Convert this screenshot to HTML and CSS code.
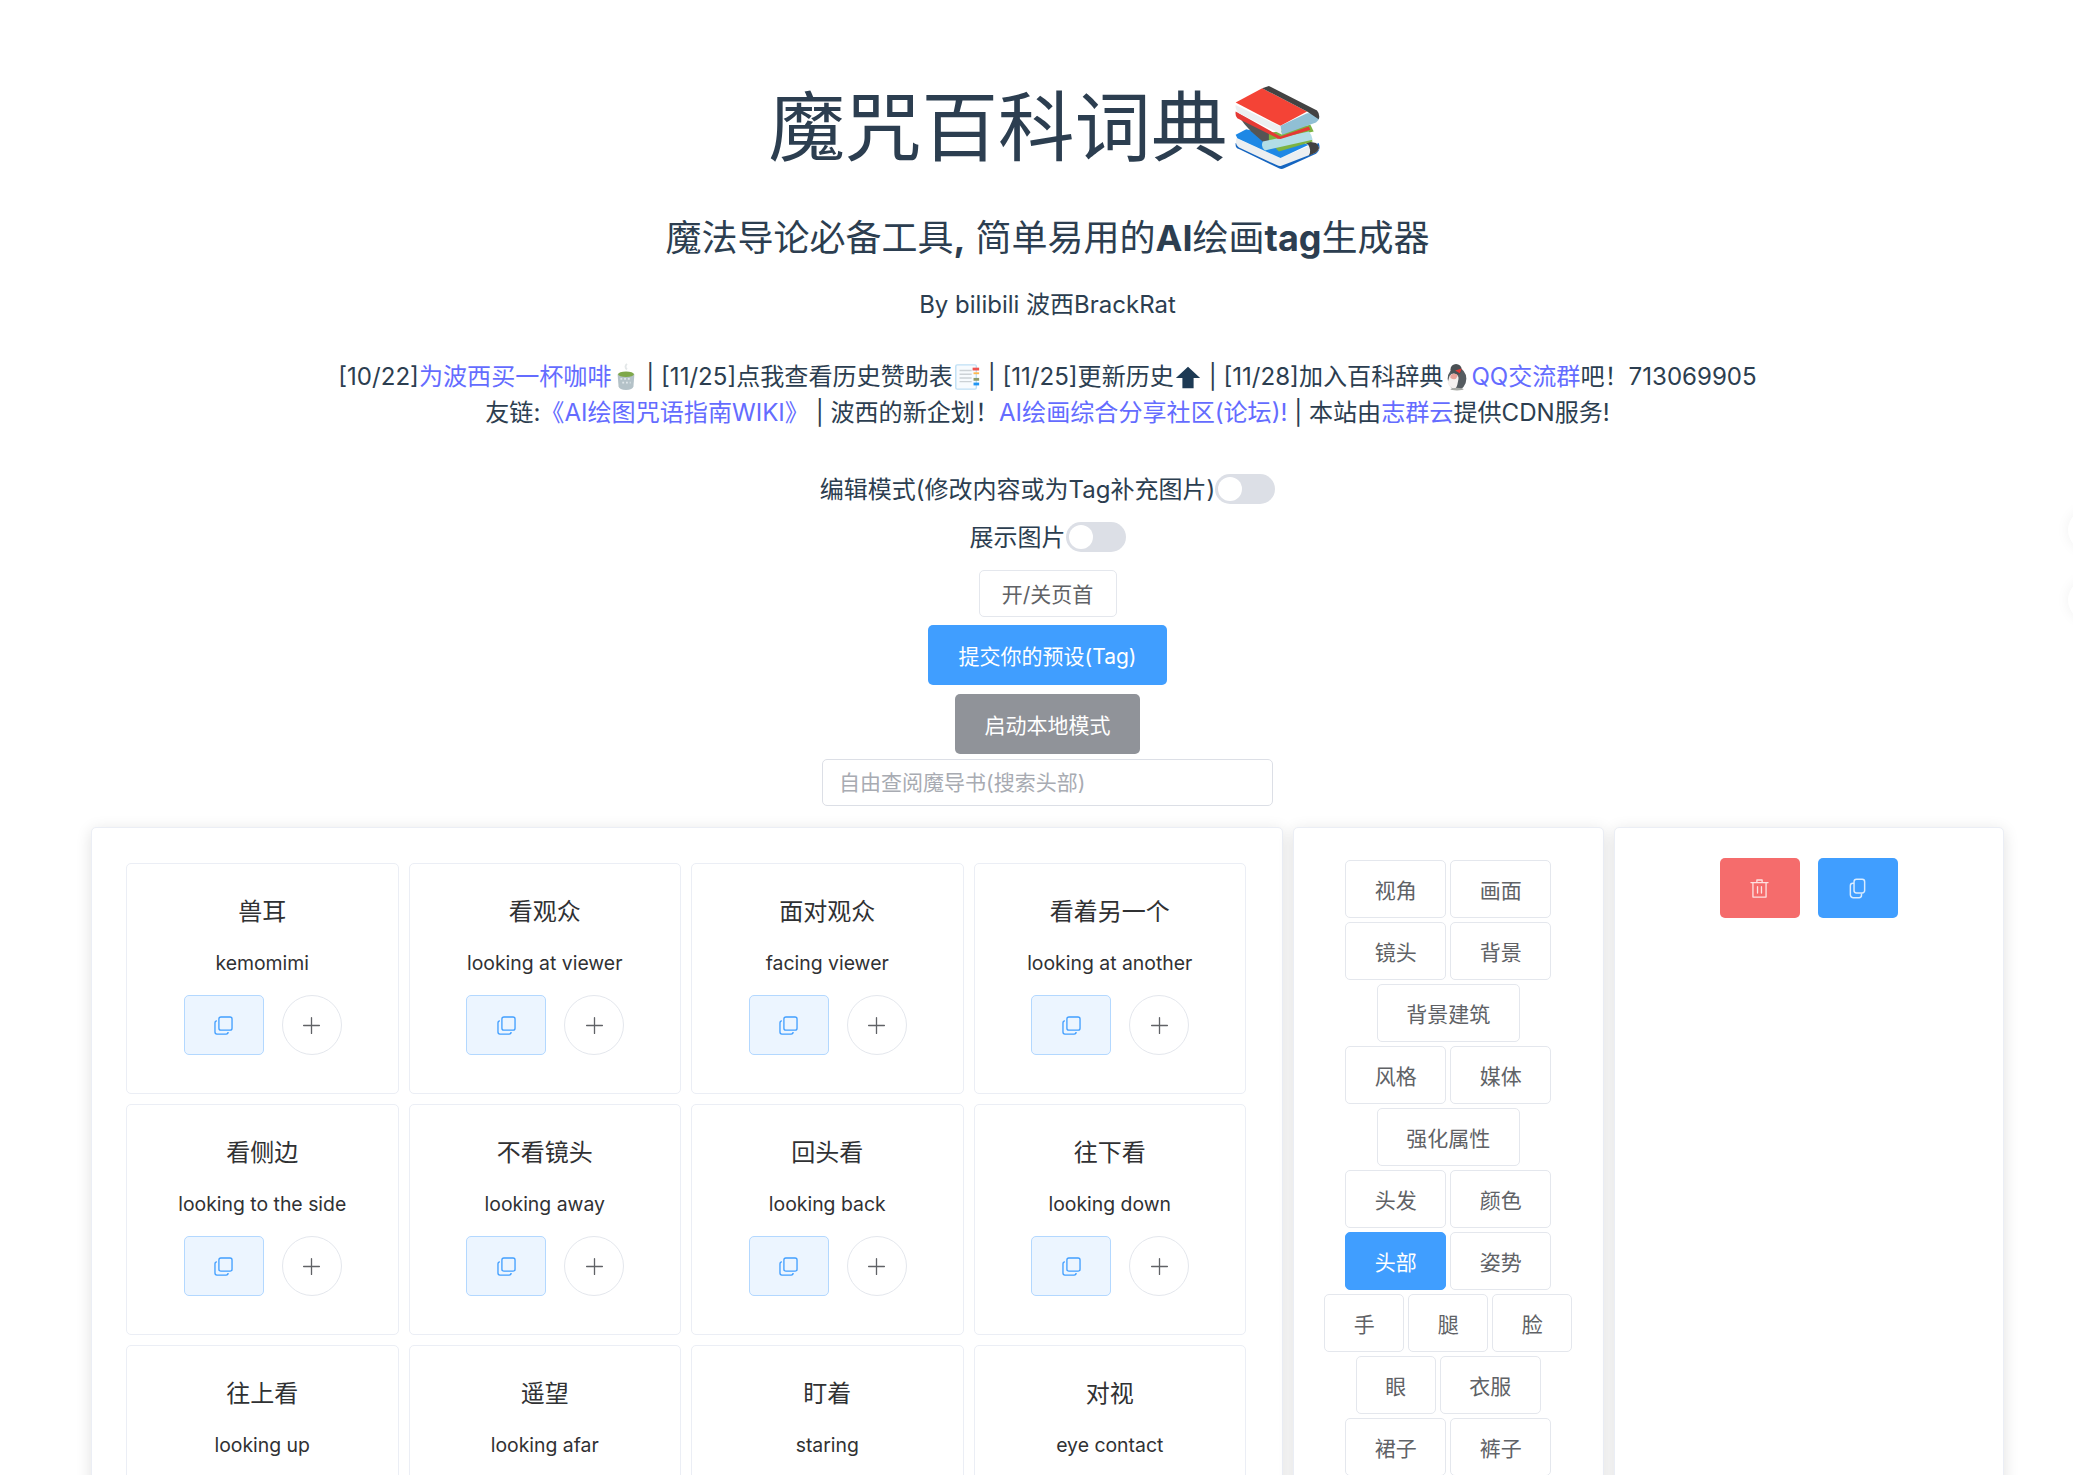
FILE: index.html
```html
<!DOCTYPE html>
<html lang="zh-CN">
<head>
<meta charset="utf-8">
<title>魔咒百科词典</title>
<link rel="stylesheet" href="styles.css">
</head>
<body>
<svg class="sprite" aria-hidden="true">
  <symbol id="i-copy" viewBox="0 0 1024 1024"><path fill="currentColor" d="M768 832a128 128 0 0 1-128 128H192A128 128 0 0 1 64 832V384a128 128 0 0 1 128-128v64a64 64 0 0 0-64 64v448a64 64 0 0 0 64 64h448a64 64 0 0 0 64-64h64z"/><path fill="currentColor" d="M384 128a64 64 0 0 0-64 64v448a64 64 0 0 0 64 64h448a64 64 0 0 0 64-64V192a64 64 0 0 0-64-64H384zm0-64h448a128 128 0 0 1 128 128v448a128 128 0 0 1-128 128H384a128 128 0 0 1-128-128V192A128 128 0 0 1 384 64z"/></symbol>
  <symbol id="i-plus" viewBox="0 0 1024 1024"><path fill="currentColor" d="M480 480V128a32 32 0 0 1 64 0v352h352a32 32 0 0 1 0 64H544v352a32 32 0 1 1-64 0V544H128a32 32 0 0 1 0-64h352z"/></symbol>
  <symbol id="i-delete" viewBox="0 0 1024 1024"><path fill="currentColor" d="M160 256H96a32 32 0 0 1 0-64h256V95.936a32 32 0 0 1 32-32h256a32 32 0 0 1 32 32V192h256a32 32 0 1 1 0 64h-64v672a32 32 0 0 1-32 32H192a32 32 0 0 1-32-32V256zm448-64v-64H416v64h192zM224 896h576V256H224v640zm192-128a32 32 0 0 1-32-32V416a32 32 0 0 1 64 0v320a32 32 0 0 1-32 32zm192 0a32 32 0 0 1-32-32V416a32 32 0 0 1 64 0v320a32 32 0 0 1-32 32z"/></symbol>
  <symbol id="i-docs" viewBox="0 0 20 20"><path fill="none" stroke="currentColor" stroke-width="1.4" d="M9 1.2h5.5a2.3 2.3 0 0 1 2.3 2.3v8.5a2.3 2.3 0 0 1-2.3 2.3H9A2.3 2.3 0 0 1 6.700 12V3.500A2.300 2.300 0 0 1 9 1.200z"/><path fill="none" stroke="currentColor" stroke-width="1.4" d="M6.700 5H5.500a2.300 2.300 0 0 0-2.300 2.300V16a2.800 2.800 0 0 0 2.800 2.800h5.500a2.300 2.300 0 0 0 2.300-2.300v-1.700"/></symbol>
</svg>

<div class="app">
  <header class="head">
    <h1 class="title">魔咒百科词典<svg class="books" viewBox="25 12 265 262" aria-hidden="true">
      <path fill="#1565c0" d="M30 190q-2 15 10 18l120 58q8 4 16 0l96-44q16-12 8-32l-115 55z"/>
      <path fill="#eceff1" d="M32 175l133 60 107-45 10 15q0 7-10 13l-104 40q-6 2-13-1L40 203q-12-8-8-28z"/>
      <path fill="#1e88e5" d="M30 165l32-17 188 47-85 40-130-60z"/>
      <path fill="#424242" d="M222 180l50 10q18 15 0 28l-22 10q10-16-2-34z"/>
      <path fill="#555" d="M38 108l92 52 14 28-32-2-36-32q-20-20-38-46z"/>
      <path fill="#7cb342" d="M130 160l125-25 10 20-135 30z"/>
      <path fill="#7cb342" d="M150 205l105-35 7 15-102 30z"/>
      <path fill="#b2dde6" d="M112 185q-8 15 6 27l144-32q-2-15-12-25z"/>
      <path fill="#e53935" d="M30 95l135 75 85-30 5 10-90 28q-10 0-15-6L35 115q-7-7-5-20z"/>
      <path fill="#eceff1" d="M30 75l135 65 5 25L40 100q-12-10-10-25z"/>
      <path fill="#f44336" d="M30 68l80-43 135 70-80 43z"/>
      <path fill="#90bfd4" d="M165 138l80-38 30 0q15 15-3 28l-102 37z"/>
      <path fill="#424242" d="M110 25l20-7 145 74q10 12 5 26l-35-23z"/>
    </svg></h1>
    <h2 class="subtitle">魔法导论必备工具<b class="latin">,</b> 简单易用的<b class="latin">AI</b>绘画<b class="latin">tag</b>生成器</h2>
    <p class="byline">By bilibili 波西BrackRat</p>
    <p class="notice">[10/22]<a href="#">为波西买一杯咖啡</a><svg class="emoji" viewBox="0 0 30 30" aria-hidden="true"><path fill="none" stroke="#e3e7e8" stroke-width="2" d="M16 1q-3 3 0 6"/><path fill="#b4c2c8" d="M6 12q9-3 18 0l-1 13q-1 4-8 4t-8-4z"/><path fill="#dfe6e9" d="M9 16h2v2H9zm4 0h2v2h-2zm4 0h2v2h-2zm-6 4h2v2h-2zm4 0h2v2h-2zm4 0h1v2h-1z"/><ellipse cx="15" cy="12" rx="8.500" ry="3" fill="#7fa84a"/></svg> | [11/25]点我查看历史赞助表<svg class="emoji" viewBox="0 0 30 30" aria-hidden="true"><rect x="3" y="2" width="22" height="26" rx="1.500" fill="#f7fbfe" stroke="#bfe0f5" stroke-width="1.500"/><path fill="none" stroke="#ccd2d6" stroke-width="1.500" d="M7 8h13M7 12h13M7 16h13M7 20h13"/><rect x="21" y="5" width="7" height="3" fill="#ef5350"/><rect x="22" y="10" width="6" height="2" fill="#ffb74d"/><rect x="22" y="16" width="6" height="3" fill="#8d9a6a"/><rect x="22" y="21" width="6" height="3" fill="#2196f3"/></svg> | [11/25]更新历史<svg class="emoji" viewBox="0 0 30 30" aria-hidden="true"><path fill="#1d3a54" d="M15 4L28 16h-7v11H9V16H2z"/></svg> | [11/28]加入百科辞典<svg class="emoji" viewBox="0 0 30 30" aria-hidden="true"><ellipse cx="15" cy="17" rx="10" ry="12" fill="#555c60"/><circle cx="14" cy="7" r="6" fill="#4a5054"/><path fill="#f5f1ef" d="M7 14q3-4 7-2t2 8q-1 7-4 8-6-2-7-7z"/><path fill="#e8a49c" d="M8 13q4-3 8 0l-2 4q-3 1-6-1z"/><path fill="#e53935" d="M13 8l7-2-2 5z"/><ellipse cx="15" cy="28" rx="7" ry="1.500" fill="#a8aaa5"/></svg><a href="#">QQ交流群</a>吧！713069905<br>友链:<a href="#">《AI绘图咒语指南WIKI》</a> | 波西的新企划！<a href="#">AI绘画综合分享社区(论坛)!</a> | 本站由<a href="#">志群云</a>提供CDN服务!</p>
    <div class="toggle-row first"><span class="toggle-label">编辑模式(修改内容或为Tag补充图片)</span><span class="switch"></span></div>
    <div class="toggle-row"><span class="toggle-label">展示图片</span><span class="switch"></span></div>
    <button class="btn btn-toggle">开/关页首</button>
    <button class="btn btn-solid btn-blue">提交你的预设(Tag)</button>
    <button class="btn btn-solid btn-gray">启动本地模式</button>
    <input class="search" type="text" placeholder="自由查阅魔导书(搜索头部)">
  </header>

  <main class="panels">
    <section class="panel panel-cards">
      <div class="cards">
        <article class="card"><h3>兽耳</h3><p>kemomimi</p><div class="actions"><button class="copy"><svg class="ico"><use href="#i-copy"/></svg></button><button class="add"><svg class="ico"><use href="#i-plus"/></svg></button></div></article>
        <article class="card"><h3>看观众</h3><p>looking at viewer</p><div class="actions"><button class="copy"><svg class="ico"><use href="#i-copy"/></svg></button><button class="add"><svg class="ico"><use href="#i-plus"/></svg></button></div></article>
        <article class="card"><h3>面对观众</h3><p>facing viewer</p><div class="actions"><button class="copy"><svg class="ico"><use href="#i-copy"/></svg></button><button class="add"><svg class="ico"><use href="#i-plus"/></svg></button></div></article>
        <article class="card"><h3>看着另一个</h3><p>looking at another</p><div class="actions"><button class="copy"><svg class="ico"><use href="#i-copy"/></svg></button><button class="add"><svg class="ico"><use href="#i-plus"/></svg></button></div></article>
        <article class="card"><h3>看侧边</h3><p>looking to the side</p><div class="actions"><button class="copy"><svg class="ico"><use href="#i-copy"/></svg></button><button class="add"><svg class="ico"><use href="#i-plus"/></svg></button></div></article>
        <article class="card"><h3>不看镜头</h3><p>looking away</p><div class="actions"><button class="copy"><svg class="ico"><use href="#i-copy"/></svg></button><button class="add"><svg class="ico"><use href="#i-plus"/></svg></button></div></article>
        <article class="card"><h3>回头看</h3><p>looking back</p><div class="actions"><button class="copy"><svg class="ico"><use href="#i-copy"/></svg></button><button class="add"><svg class="ico"><use href="#i-plus"/></svg></button></div></article>
        <article class="card"><h3>往下看</h3><p>looking down</p><div class="actions"><button class="copy"><svg class="ico"><use href="#i-copy"/></svg></button><button class="add"><svg class="ico"><use href="#i-plus"/></svg></button></div></article>
        <article class="card"><h3>往上看</h3><p>looking up</p><div class="actions"><button class="copy"><svg class="ico"><use href="#i-copy"/></svg></button><button class="add"><svg class="ico"><use href="#i-plus"/></svg></button></div></article>
        <article class="card"><h3>遥望</h3><p>looking afar</p><div class="actions"><button class="copy"><svg class="ico"><use href="#i-copy"/></svg></button><button class="add"><svg class="ico"><use href="#i-plus"/></svg></button></div></article>
        <article class="card"><h3>盯着</h3><p>staring</p><div class="actions"><button class="copy"><svg class="ico"><use href="#i-copy"/></svg></button><button class="add"><svg class="ico"><use href="#i-plus"/></svg></button></div></article>
        <article class="card"><h3>对视</h3><p>eye contact</p><div class="actions"><button class="copy"><svg class="ico"><use href="#i-copy"/></svg></button><button class="add"><svg class="ico"><use href="#i-plus"/></svg></button></div></article>
      </div>
    </section>

    <nav class="panel panel-cats">
      <div class="cat-row"><button class="btn cat">视角</button><button class="btn cat">画面</button></div>
      <div class="cat-row"><button class="btn cat">镜头</button><button class="btn cat">背景</button></div>
      <div class="cat-row"><button class="btn cat">背景建筑</button></div>
      <div class="cat-row"><button class="btn cat">风格</button><button class="btn cat">媒体</button></div>
      <div class="cat-row"><button class="btn cat">强化属性</button></div>
      <div class="cat-row"><button class="btn cat">头发</button><button class="btn cat">颜色</button></div>
      <div class="cat-row"><button class="btn cat active">头部</button><button class="btn cat">姿势</button></div>
      <div class="cat-row"><button class="btn cat">手</button><button class="btn cat">腿</button><button class="btn cat">脸</button></div>
      <div class="cat-row"><button class="btn cat">眼</button><button class="btn cat">衣服</button></div>
      <div class="cat-row"><button class="btn cat">裙子</button><button class="btn cat">裤子</button></div>
    </nav>

    <aside class="panel panel-tools">
      <button class="tool tool-del"><svg class="ico"><use href="#i-delete"/></svg></button>
      <button class="tool tool-copy"><svg class="ico"><use href="#i-docs"/></svg></button>
    </aside>
  </main>
</div>

<span class="float float-a"></span>
<span class="float float-b"></span>
</body>
</html>
```
FILE: styles.css
```css
html, body {
  height: 100%;
  margin: 0;
  overflow: hidden;
}
body {
  position: relative;
  background: #fff;
  color: #2c3e50;
  font-family: Inter, "Noto Sans CJK SC", sans-serif;
}
.sprite { display: none; }
.app { padding-left: 22px; }

.head {
  display: flex;
  flex-direction: column;
  align-items: center;
  padding-top: 82px;
  text-align: center;
}
.title {
  display: flex;
  align-items: center;
  height: 90px;
  margin: 0 5px 0 0;
  font-size: 76.500px;
  font-weight: 400;
  line-height: 90px;
}
.books { width: 88px; height: 87px; margin-left: 6px; }
.subtitle {
  margin: 41px 0 0;
  font-size: 36px;
  font-weight: 400;
  line-height: 50px;
}
.latin { font-weight: 700; }
.byline {
  margin: 24px 0 0;
  font-size: 24px;
  line-height: 36px;
}
.notice {
  margin: 35.500px 0 0;
  font-size: 24.080px;
  line-height: 36.700px;
}
.notice a { color: #646cff; text-decoration: none; }
.emoji {
  display: inline-block;
  width: 28px;
  height: 28px;
  vertical-align: -6px;
}
.toggle-row {
  display: flex;
  align-items: center;
  height: 48px;
  font-size: 24px;
}
.toggle-row.first { margin-top: 33.500px; }
.toggle-label { margin-bottom: 3px; }
.switch {
  position: relative;
  width: 60px;
  height: 30px;
  border-radius: 15px;
  background: #dcdfe6;
}
.switch::after {
  content: "";
  position: absolute;
  top: 3px;
  left: 3px;
  width: 24px;
  height: 24px;
  border-radius: 50%;
  background: #fff;
}
.btn {
  box-sizing: border-box;
  border: 1px solid #e4e7ed;
  border-radius: 5px;
  background: #fff;
  color: #606266;
  font-family: inherit;
  font-size: 21px;
  padding: 0;
}
.btn-toggle { width: 138px; height: 47px; margin-top: 9px; padding-bottom: 2px; }
.btn-solid { height: 60px; border: 0; color: #fff; }
.btn-blue { width: 239px; margin-top: 8px; background: #409eff; }
.btn-gray { width: 185px; margin-top: 9px; background: #909399; }
.search {
  box-sizing: border-box;
  width: 451px;
  height: 47px;
  margin-top: 5px;
  padding: 0 16px;
  border: 1px solid #dcdfe6;
  border-radius: 5px;
  font-family: inherit;
  font-size: 21px;
  color: #606266;
}
.search::placeholder { color: #a8abb2; }

.panels {
  display: grid;
  grid-template-columns: 1192px 310.500px 390px;
  gap: 10px;
  margin: 21px 0 0 69px;
}
.panel {
  box-sizing: border-box;
  min-height: 900px;
  border: 1px solid #ebeef5;
  border-radius: 5px;
  background: #fff;
  box-shadow: 0 3px 16px rgba(0, 0, 0, .12);
}
.panel-cards { padding: 35px 36px 35px 34px; }
.cards {
  display: grid;
  grid-template-columns: repeat(4, 1fr);
  gap: 10px;
}
.card {
  box-sizing: border-box;
  height: 231px;
  padding-top: 30px;
  border: 1px solid #ebeef5;
  border-radius: 5px;
  color: #303133;
  text-align: center;
}
.card h3 {
  margin: 0;
  font-size: 24px;
  font-weight: 400;
  line-height: 36px;
}
.card p {
  margin: 19px 0 0;
  font-size: 19.400px;
  line-height: 28px;
}
.actions {
  display: flex;
  justify-content: center;
  gap: 18px;
  margin-top: 18px;
  padding-left: 1px;
}
.ico { width: 21px; height: 21px; display: block; }
.copy, .add, .tool {
  display: flex;
  align-items: center;
  justify-content: center;
  box-sizing: border-box;
  height: 60px;
  padding: 0;
}
.copy {
  width: 80px;
  border: 1px solid #b3d8ff;
  border-radius: 5px;
  background: #ecf5ff;
  color: #409eff;
}
.add {
  width: 60px;
  border: 1px solid #e4e7ed;
  border-radius: 50%;
  background: #fff;
  color: #606266;
}
.panel-cats {
  display: flex;
  flex-direction: column;
  gap: 4px;
  padding-top: 32px;
}
.cat-row {
  display: flex;
  justify-content: center;
  gap: 4px;
}
.cat {
  height: 58px;
  padding: 0 28.500px;
}
.cat.active {
  border-color: #409eff;
  background: #409eff;
  color: #fff;
}
.panel-tools {
  display: flex;
  justify-content: center;
  align-items: flex-start;
  gap: 18px;
  padding-top: 30px;
}
.tool {
  width: 80px;
  border: 0;
  border-radius: 5px;
  color: #fff;
}
.tool-del { background: #f56c6c; color: #fde2e2; }
.tool-copy { background: #409eff; color: #d9ecff; }

.float {
  position: absolute;
  left: 2068px;
  width: 42px;
  height: 42px;
  border-radius: 50%;
  background: #fff;
  box-shadow: 0 0 14px rgba(0, 0, 0, .06);
}
.float-a { top: 509px; }
.float-b { top: 579px; }
```
